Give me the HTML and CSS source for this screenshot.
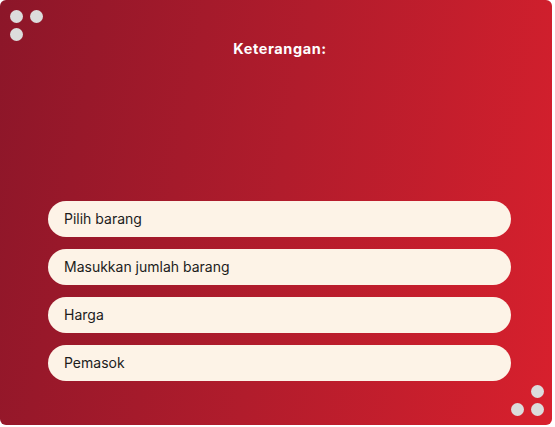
FILE: index.html
```html
<!DOCTYPE html>
<html>
<head>
<meta charset="utf-8">
<link rel="stylesheet" href="styles.css">
</head>
<body>
<div class="card">
  <div class="dots dots-tl">
    <span class="dot"></span><span class="dot"></span>
    <span class="dot"></span>
  </div>
  <h2 class="title">Keterangan:</h2>
  <div class="list">
    <div class="pill">Pilih barang</div>
    <div class="pill">Masukkan jumlah barang</div>
    <div class="pill">Harga</div>
    <div class="pill">Pemasok</div>
  </div>
  <div class="dots dots-br">
    <span class="dot"></span>
    <span class="dot"></span><span class="dot"></span>
  </div>
</div>
</body>
</html>
```
FILE: styles.css
```css
html, body { margin: 0; padding: 0; background: #ffffff; }
.card {
  position: relative;
  width: 552px;
  height: 425px;
  border-radius: 6px;
  background: linear-gradient(100deg, #8c1629 0%, #b11c2c 50%, #d8202d 100%);
  box-sizing: border-box;
  font-family: Inter, "Liberation Sans", sans-serif;
}
.dots {
  position: absolute;
  display: grid;
  grid-template-columns: 13px 13px;
  grid-auto-rows: 13px;
  column-gap: 7px;
  row-gap: 5px;
}
.dots-tl { left: 10px; top: 10px; }
.dots-br { right: 8px; bottom: 9px; }
.dots-br .dot:first-child { grid-column: 2; }
.dot { width: 13px; height: 13px; border-radius: 50%; background: #dcdcdc; }
.title {
  margin: 0;
  padding-top: 39px;
  padding-left: 8px;
  text-align: center;
  color: #ffffff;
  font-size: 14.5px;
  font-weight: 700;
  letter-spacing: 0.6px;
  line-height: 20px;
}
.list {
  display: flex;
  flex-direction: column;
  gap: 12px;
  margin: 142px 41px 0 48px;
}
.pill {
  height: 36px;
  border-radius: 18px;
  background: #fdf3e7;
  color: #1c1c1c;
  font-size: 14px;
  line-height: 36px;
  padding-left: 16px;
}
```
